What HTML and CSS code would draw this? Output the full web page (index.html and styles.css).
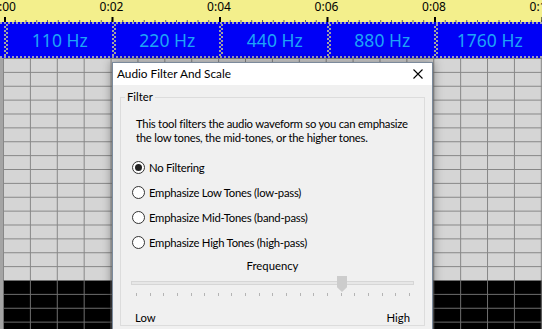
FILE: index.html
```html
<!DOCTYPE html>
<html>
<head>
<meta charset="utf-8">
<link rel="stylesheet" href="styles.css">
</head>
<body>
<div class="screen">
  <div class="ruler">
    <div class="ruler-labels">
      <span class="tick-label">0:00</span>
      <span class="tick-label">0:02</span>
      <span class="tick-label">0:04</span>
      <span class="tick-label">0:06</span>
      <span class="tick-label">0:08</span>
      <span class="tick-label">0:10</span>
    </div>
  </div>
  <div class="band">
    <div class="band-edge"></div>
    <div class="band-row">
      <div class="band-lead"></div>
      <div class="divider"></div><div class="cell">110 Hz</div>
      <div class="divider"></div><div class="cell">220 Hz</div>
      <div class="divider"></div><div class="cell">440 Hz</div>
      <div class="divider"></div><div class="cell">880 Hz</div>
      <div class="divider"></div><div class="cell">1760 Hz</div>
      <div class="divider"></div><div class="cell"></div>
    </div>
    <div class="band-edge"></div>
  </div>
  <div class="tracks">
    <div class="gutter"></div>
    <div class="lanes">
      <div class="lane lane-light"></div>
      <div class="lane lane-dark"></div>
    </div>
  </div>

  <div class="dialog">
    <div class="titlebar">
      <span class="title">Audio Filter And Scale</span>
      <svg class="close" width="10" height="10" viewBox="0 0 10 10">
        <path d="M0.5 0.5 L9.5 9.5 M9.5 0.5 L0.5 9.5" stroke="#000" stroke-width="1.1" fill="none"/>
      </svg>
    </div>
    <div class="dialog-body">
      <fieldset class="group">
        <legend class="group-label">Filter</legend>
        <p class="desc">This tool filters the audio waveform so you can emphasize<br>the low tones, the mid-tones, or the higher tones.</p>
        <div class="radios">
          <div class="radio-row"><span class="radio checked"></span><span>No Filtering</span></div>
          <div class="radio-row"><span class="radio"></span><span>Emphasize Low Tones (low-pass)</span></div>
          <div class="radio-row"><span class="radio"></span><span>Emphasize Mid-Tones (band-pass)</span></div>
          <div class="radio-row"><span class="radio"></span><span>Emphasize High Tones (high-pass)</span></div>
        </div>
        <div class="freq-label">Frequency</div>
        <div class="slider">
          <div class="track"></div>
          <div class="thumb"></div>
          <div class="ticks">
            <i></i><i></i><i></i><i></i><i></i><i></i><i></i><i></i><i></i><i></i><i></i>
            <i></i><i></i><i></i><i></i><i></i><i></i><i></i><i></i><i></i><i></i>
          </div>
        </div>
        <div class="range-labels"><span>Low</span><span>High</span></div>
      </fieldset>
    </div>
  </div>
</div>
</body>
</html>
```

FILE: styles.css
```css
html, body {
  margin: 0;
  padding: 0;
}
body {
  width: 542px;
  height: 329px;
  overflow: hidden;
  font-family: "Noto Sans", "DejaVu Sans", sans-serif;
}
.screen {
  position: relative;
  width: 542px;
  height: 329px;
  overflow: hidden;
  display: flex;
  flex-direction: column;
}

/* ruler */
.ruler {
  height: 22px;
  flex: none;
  background-color: #f3ef8c;
  background-image:
    linear-gradient(to right, #000 2px, transparent 2px),
    linear-gradient(to right, #6b6b55 1px, transparent 1px);
  background-size: 107.5px 5px, 10.75px 2px;
  background-position: 4px 100%, 4px 100%;
  background-repeat: repeat-x, repeat-x;
  overflow: hidden;
}
.ruler-labels {
  display: flex;
  margin-left: -49.75px;
}
.tick-label {
  flex: none;
  width: 107.5px;
  text-align: center;
  font-size: 12px;
  line-height: 14px;
  color: #000;
}

/* band */
.band {
  flex: none;
  height: 36px;
  background: #0000f6;
  display: flex;
  flex-direction: column;
}
.band-edge {
  height: 2px;
  background: repeating-linear-gradient(to right, #a2a2b4 0 2px, #0000f6 2px 4px);
}
.band-row {
  height: 32px;
  display: flex;
}
.band-lead {
  flex: none;
  width: 4px;
}
.divider {
  flex: none;
  width: 4px;
  background: conic-gradient(#a2a2a2 90deg, #0000f6 90deg 180deg, #a2a2a2 180deg 270deg, #0000f6 270deg) 0 0 / 4px 4px;
}
.cell {
  flex: none;
  width: 103.5px;
  color: #1ea4f6;
  font-size: 17.5px;
  line-height: 32px;
  text-align: center;
}

/* tracks */
.tracks {
  flex: 1;
  display: flex;
}
.gutter {
  flex: none;
  width: 3px;
  background: #a4a4a4;
}
.lanes {
  flex: 1;
  display: flex;
  flex-direction: column;
}
.lane {
  background-image:
    linear-gradient(to right, #878787 1px, transparent 1px),
    linear-gradient(to bottom, #878787 1px, transparent 1px);
  background-size: 26.9px 100%, 100% 13.875px;
  background-position: 0 0, 0 0;
}
.lane-light {
  height: 222px;
  flex: none;
  background-color: #d5d5d5;
}
.lane-dark {
  flex: 1;
  background-color: #000;
  background-image:
    linear-gradient(to right, #6e6e6e 1px, transparent 1px),
    linear-gradient(to bottom, #6e6e6e 1px, transparent 1px);
}

/* dialog */
.dialog {
  position: absolute;
  left: 112px;
  top: 62px;
  width: 321px;
  height: 290px;
  box-sizing: border-box;
  border: 1px solid #7b8a9c;
  background: #f0f0f0;
  box-shadow: 0 0 9px 1px rgba(0, 0, 0, 0.35);
  font-family: Lato, "Noto Sans", sans-serif;
  font-size: 11.3px;
  color: #000;
}
.titlebar {
  height: 22px;
  background: #fff;
  display: flex;
  align-items: center;
  justify-content: space-between;
  padding: 0 9px 0 4px;
}
.title {
  line-height: 16px;
  font-size: 11.8px;
}
.close {
  display: block;
}
.dialog-body {
  padding: 4px 7px 0 7px;
}
.group {
  margin: 0;
  padding: 0 15px 0 15px;
  border: 1px solid #dcdcdc;
  min-width: 0;
}
.group-label {
  padding: 0 2px;
  margin-left: -11px;
  line-height: 16px;
}
.desc {
  margin: 12px 0 0;
  line-height: 14px;
  white-space: nowrap;
  letter-spacing: -0.25px;
}
.radios {
  margin-top: 9.5px;
}
.radio-row {
  height: 25px;
  display: flex;
  align-items: center;
  gap: 4px;
  margin-left: -4px;
  letter-spacing: -0.25px;
}
.radio {
  flex: none;
  width: 13px;
  height: 13px;
  box-sizing: border-box;
  border: 1px solid #333;
  border-radius: 50%;
  background: #fff;
  display: flex;
  align-items: center;
  justify-content: center;
}
.radio.checked::after {
  content: "";
  width: 7px;
  height: 7px;
  border-radius: 50%;
  background: #222;
}
.freq-label {
  text-align: center;
  line-height: 21.5px;
}
.slider {
  position: relative;
  height: 22px;
  margin: 0 -5px;
}
.track {
  position: absolute;
  left: 0;
  right: 0;
  top: 5px;
  height: 4px;
  box-sizing: border-box;
  border: 1px solid #d6d6d6;
  background: #e7e7e7;
}
.thumb {
  position: absolute;
  left: 206px;
  top: 0;
  width: 10px;
  height: 16px;
  background: #cccccc;
  clip-path: polygon(0 0, 100% 0, 100% 70%, 50% 100%, 0 70%);
}
.ticks {
  position: absolute;
  left: 5px;
  right: 4px;
  top: 17px;
  display: flex;
  justify-content: space-between;
}
.ticks i {
  display: block;
  width: 1px;
  height: 3px;
  background: #b4b4b4;
}
.range-labels {
  display: flex;
  justify-content: space-between;
  line-height: 14px;
  margin: 13px -1px 0 -1px;
}
```
